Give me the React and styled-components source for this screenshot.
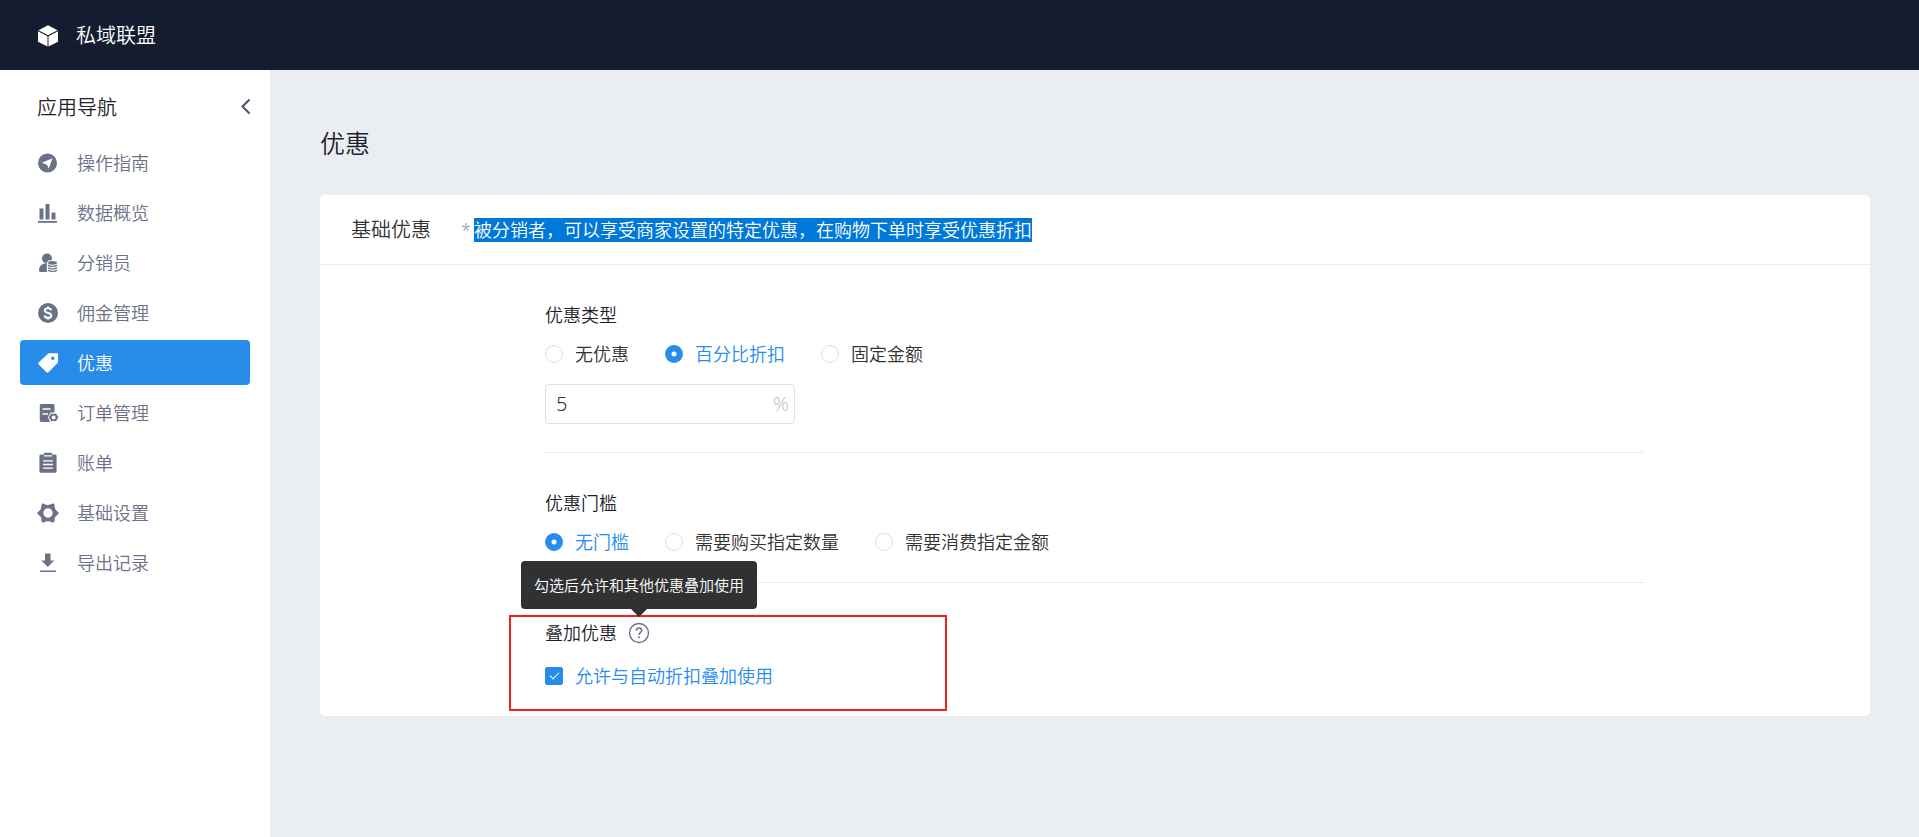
import React, { useState } from 'react';
import styled, { createGlobalStyle, css } from 'styled-components';

const blue = '#288ceb';

const GlobalStyle = createGlobalStyle`
  *, *::before, *::after { box-sizing: border-box; }
  body {
    margin: 0;
    background: #eaedf2;
    color: #1f1f2b;
    font-family: "Noto Sans", "Noto Sans CJK SC", sans-serif;
    font-size: 18px;
    font-weight: 350;
    line-height: 24px;
  }
  button, input { font: inherit; color: inherit; }
`;

const Page = styled.div`
  min-height: 100vh;
  display: flex;
  flex-direction: column;
`;

const TopBar = styled.header`
  height: 70px;
  padding: 2px 37px 0;
  display: flex;
  align-items: center;
  gap: 17px;
  background: #141c30;
  color: #fff;
  font-size: 20px;
`;

const Columns = styled.div`
  flex: 1;
  display: flex;
`;

const Sidebar = styled.aside`
  flex: 0 0 270px;
  padding: 23px 20px 20px;
  background: #fff;
`;

const SidebarHead = styled.div`
  display: flex;
  align-items: center;
  justify-content: space-between;
  padding-left: 17px;
  margin-bottom: 17px;
`;

const SidebarTitle = styled.h2`
  margin: 0;
  font-size: 20px;
  font-weight: inherit;
  line-height: 30px;
`;

const IconButton = styled.button`
  display: flex;
  padding: 0;
  border: 0;
  background: none;
  color: #4a5070;
  cursor: pointer;
`;

const NavList = styled.nav`
  display: flex;
  flex-direction: column;
  gap: 5px;
`;

const NavItem = styled.a`
  display: flex;
  align-items: center;
  gap: 18px;
  height: 45px;
  padding: 0 17px;
  border-radius: 4px;
  color: #6b7285;
  text-decoration: none;
  ${(p) => p.$active && css`
    background: ${blue};
    color: #fff;
  `}
`;

const Main = styled.main`
  flex: 1;
  min-width: 0;
  padding: 58px 49px 58px 50px;
`;

const PageTitle = styled.h1`
  margin: 0 0 37px;
  font-size: 25px;
  font-weight: inherit;
  line-height: 30px;
`;

const Card = styled.section`
  background: #fff;
  border-radius: 5px;
`;

const CardHead = styled.div`
  display: flex;
  align-items: center;
  gap: 30px;
  height: 70px;
  padding: 0 31px;
  border-bottom: 1px solid #ebedf0;
`;

const CardTitle = styled.h2`
  margin: 0;
  color: #333;
  font-size: 20px;
  font-weight: inherit;
`;

const Hint = styled.p`
  display: flex;
  gap: 3px;
  margin: 0;
  color: #999;
`;

const Highlight = styled.mark`
  background: #0078d7;
  color: #fff;
`;

const Form = styled.form`
  padding: 0 225px;
`;

const Group = styled.fieldset`
  position: relative;
  min-width: 0;
  margin: 0;
  padding: 38px 0 28px;
  border: 0;
  & + & { border-top: 1px solid #ebedf0; }
`;

const GroupTitle = styled.div`
  display: flex;
  align-items: center;
  gap: 11px;
  margin-bottom: 15px;
`;

const Options = styled.div`
  display: flex;
  flex-wrap: wrap;
  gap: 12px 36px;
`;

const Choice = styled.label`
  display: flex;
  align-items: center;
  gap: 12px;
  color: #333;
  cursor: pointer;
  &:has(input:checked) { color: ${blue}; }
`;

const CheckRow = styled.div`
  padding-top: 4px;
`;

const Radio = styled.input.attrs({ type: 'radio' })`
  appearance: none;
  width: 18px;
  height: 18px;
  margin: 0;
  border: 1px solid #dcdfe6;
  border-radius: 50%;
  background: #fff;
  &:checked {
    border-color: ${blue};
    background: radial-gradient(circle, #fff 2px, ${blue} 3px);
  }
`;

const Checkbox = styled.input.attrs({ type: 'checkbox' })`
  appearance: none;
  display: grid;
  place-items: center;
  width: 18px;
  height: 18px;
  margin: 0;
  border: 1px solid #dcdfe6;
  border-radius: 2px;
  background: #fff;
  &:checked {
    border-color: ${blue};
    background: ${blue};
  }
  &:checked::after {
    content: "";
    width: 5px;
    height: 9px;
    margin-bottom: 3px;
    border: solid #fff;
    border-width: 0 1px 1px 0;
    transform: rotate(45deg);
  }
`;

const AmountBox = styled.div`
  display: flex;
  align-items: center;
  width: 250px;
  height: 40px;
  margin-top: 18px;
  padding: 0 5px 0 10px;
  border: 1px solid #dcdfe6;
  border-radius: 4px;
  color: #333;
  font-size: 20px;
`;

const AmountInput = styled.input`
  flex: 1;
  min-width: 0;
  padding: 0;
  border: 0;
  outline: 0;
  background: none;
`;

const Unit = styled.span`
  color: #c0c4cc;
`;

const HelpAnchor = styled.span`
  position: relative;
  display: flex;
`;

const Tooltip = styled.span`
  position: absolute;
  z-index: 2;
  bottom: calc(100% + 13px);
  left: 50%;
  transform: translateX(-50%);
  padding: 12px 13px;
  border-radius: 4px;
  background: #303133;
  color: #fff;
  font-size: 15px;
  white-space: nowrap;
  &::after {
    content: "";
    position: absolute;
    top: 100%;
    left: 50%;
    margin-left: -8px;
    border: 8px solid transparent;
    border-bottom-width: 0;
    border-top-color: #303133;
  }
`;

const Callout = styled.div`
  position: absolute;
  top: 32px;
  left: -36px;
  width: 438px;
  height: 96px;
  border: 2px solid #f81d1d;
  pointer-events: none;
`;

const Svg = ({ size = 22, children }) => (
  <svg width={size} height={size} viewBox="0 0 22 22" fill="currentColor" aria-hidden="true">
    {children}
  </svg>
);

const icons = {
  cube: (
    <>
      <path d="M11 .3 20.500 5.300 11 10.200 1.500 5.300Z" />
      <path d="M1 6.300 10.500 11.200V21.600L1 16.800Z" />
      <path d="M21 6.300 11.500 11.200V21.600L21 16.800Z" />
    </>
  ),
  guide: (
    <path fillRule="evenodd" d="M10.5 1.5a9.5 9.5 0 1 0 0 19 9.5 9.5 0 0 0 0-19ZM15.5 6.2 11.8 16.5 9.9 12.7 4.8 10.7Z" />
  ),
  chart: (
    <>
      <path d="M2.500 6.500h4v11h-4zM8.500 2h4v15.500h-4zM14.500 10.500h4v7h-4z" />
      <path d="M1 19h19v1.800H1z" />
    </>
  ),
  agent: (
    <>
      <circle cx="10" cy="6.500" r="5" />
      <path d="M8 11.500C4.500 12 2 14.500 2 18.500c0 .9.700 1.500 1.500 1.500H10v-9Z" />
      <path d="M9.800 10.500 12 8.200h7.500l2.500 2.300v9L18 22h-5l-3.200-2.500Z" fill="#fff" />
      <ellipse cx="15.500" cy="10.800" rx="4.500" ry="1.900" />
      <path d="M11 13c1.600 1.900 7.400 1.900 9 0M11 15.500c1.600 1.900 7.400 1.900 9 0M11 18c1.600 1.900 7.400 1.900 9 0" fill="none" stroke="currentColor" strokeWidth="1.300" />
    </>
  ),
  money: (
    <>
      <circle cx="11" cy="11" r="10" />
      <path d="M14.200 8.200C13.800 6.900 12.500 6.300 11 6.300c-1.900 0-3.200.9-3.200 2.300 0 3.100 6.600 1.500 6.600 4.800 0 1.500-1.500 2.400-3.400 2.400-1.800 0-3.200-.8-3.500-2.300M11 4.500v2M11 15.500v2" fill="none" stroke="#fff" strokeWidth="2" />
    </>
  ),
  tag: (
    <path fillRule="evenodd" d="M12.200 1.300H20c.6 0 1 .4 1 1v7.500c0 .5-.2.900-.5 1.200l-9 9.300c-.6.600-1.400.6-2 0L1.700 12.600c-.6-.6-.6-1.400 0-2L11 1.800c.3-.3.700-.5 1.200-.5ZM15.800 4.600a1.700 1.700 0 1 0 0 3.400 1.700 1.700 0 0 0 0-3.400Z" />
  ),
  order: (
    <>
      <path d="M4.500 2h11.300c1 0 1.700.7 1.700 1.700V20h-13C3.500 20 2.800 19.300 2.800 18.300V3.700C2.800 2.700 3.500 2 4.500 2Z" />
      <path d="M5.500 7h8M5.500 12h5.500" stroke="#fff" strokeWidth="1.600" />
      <path d="M11 15.300 13.500 10.500H22v10.500H13.500Z" fill="#fff" />
      <path fillRule="evenodd" d="m14.200 11.500 1.300.3h2.200l1.300-.3 1 1.800.6 1 .9 1-.9 1.100-.6 1-1 1.800-1.300-.3h-2.200l-1.300.3-1-1.800-.6-1-.9-1.100.9-1 .6-1ZM16.600 13.400a2 2 0 1 0 0 4 2 2 0 0 0 0-4Z" />
    </>
  ),
  bill: (
    <>
      <path d="M4 2.500h3V2c0-.8.600-1.200 1.300-1.200h5.400c.7 0 1.300.4 1.300 1.200v.5h3c.9 0 1.600.6 1.600 1.500v15.200c0 .9-.7 1.500-1.600 1.500H4c-.9 0-1.600-.6-1.600-1.500V4c0-.9.700-1.500 1.600-1.500Z" />
      <path d="M7 3.800h8M6 8.800h10M6 12.500h10M6 16.200h10" stroke="#fff" strokeWidth="1.300" />
    </>
  ),
  settings: (
    <path fillRule="evenodd" d="M5.200 1.800c.8-.6 1.700-.4 2.300.2.900.8 2 .9 3.500.9s2.600-.1 3.500-.9c.6-.6 1.500-.8 2.300-.2.800.6 1 1.400.8 2.200-.2 1.300.3 2.300 1 3.500.8 1.200 1.400 1.700 2.300 2.200 1 .7 1 2 0 2.700-.9.500-1.500 1-2.300 2.200-.7 1.200-1.200 2.200-1 3.500.2.800 0 1.600-.8 2.200-.8.600-1.700.4-2.300-.2-.9-.8-2-.9-3.500-.9s-2.600.1-3.500.9c-.6.6-1.500.8-2.300.2-.8-.6-1-1.400-.8-2.200.2-1.300-.3-2.300-1-3.500C2.600 13.400 2 12.900 1.100 12.400c-1-.7-1-2 0-2.700C2 9.200 2.600 8.700 3.400 7.500c.7-1.200 1.200-2.200 1-3.500-.2-.8 0-1.600.8-2.200ZM11 6.300a4.700 4.700 0 1 0 0 9.400 4.700 4.700 0 0 0 0-9.400Z" />
  ),
  download: (
    <>
      <path d="M8 1.500h5.500V8.500h3.700L10.800 15 4.300 8.500H8Z" />
      <path d="M3 18.500h16v1.500H3z" />
    </>
  ),
};

const navigation = [
  ['guide', '操作指南'],
  ['chart', '数据概览'],
  ['agent', '分销员'],
  ['money', '佣金管理'],
  ['tag', '优惠'],
  ['order', '订单管理'],
  ['bill', '账单'],
  ['settings', '基础设置'],
  ['download', '导出记录'],
];

function RadioGroup({ name, options, initial }) {
  const [value, setValue] = useState(initial);
  return (
    <Options>
      {options.map((label) => (
        <Choice key={label}>
          <Radio name={name} value={label} checked={value === label} onChange={() => setValue(label)} />
          {label}
        </Choice>
      ))}
    </Options>
  );
}

export default function App() {
  return (
    <Page>
      <GlobalStyle />
      <TopBar>
        <Svg>{icons.cube}</Svg>
        私域联盟
      </TopBar>
      <Columns>
        <Sidebar>
          <SidebarHead>
            <SidebarTitle>应用导航</SidebarTitle>
            <IconButton type="button" aria-label="收起导航">
              <svg width="12" height="18" viewBox="0 0 12 18" fill="none" stroke="currentColor" strokeWidth="2" aria-hidden="true">
                <path d="M11.500 .500 4.500 7.500 11.500 14.500" />
              </svg>
            </IconButton>
          </SidebarHead>
          <NavList>
            {navigation.map(([icon, label]) => (
              <NavItem
                key={icon}
                href={`#${icon}`}
                $active={icon === 'tag'}
                aria-current={icon === 'tag' ? 'page' : undefined}
              >
                <Svg>{icons[icon]}</Svg>
                {label}
              </NavItem>
            ))}
          </NavList>
        </Sidebar>
        <Main>
          <PageTitle>优惠</PageTitle>
          <Card>
            <CardHead>
              <CardTitle>基础优惠</CardTitle>
              <Hint>
                <span>*</span>
                <Highlight>被分销者，可以享受商家设置的特定优惠，在购物下单时享受优惠折扣</Highlight>
              </Hint>
            </CardHead>
            <Form>
              <Group aria-label="优惠类型">
                <GroupTitle>优惠类型</GroupTitle>
                <RadioGroup name="type" options={['无优惠', '百分比折扣', '固定金额']} initial="百分比折扣" />
                <AmountBox>
                  <AmountInput type="text" defaultValue="5" aria-label="折扣百分比" />
                  <Unit>%</Unit>
                </AmountBox>
              </Group>
              <Group aria-label="优惠门槛">
                <GroupTitle>优惠门槛</GroupTitle>
                <RadioGroup name="threshold" options={['无门槛', '需要购买指定数量', '需要消费指定金额']} initial="无门槛" />
              </Group>
              <Group aria-label="叠加优惠">
                <GroupTitle>
                  叠加优惠
                  <HelpAnchor>
                    <IconButton type="button" aria-label="帮助" aria-describedby="stack-tip">
                      <svg width="22" height="22" viewBox="0 0 22 22" fill="none" stroke="#6b7285" aria-hidden="true">
                        <circle cx="11" cy="11" r="9.500" strokeWidth="1.400" />
                        <path d="M8.300 8.800c0-1.700 1.100-2.800 2.700-2.800s2.700 1 2.700 2.500c0 2-2.700 2.200-2.700 4.400M11 14.300v1.900" strokeWidth="1.500" />
                      </svg>
                    </IconButton>
                    <Tooltip role="tooltip" id="stack-tip">勾选后允许和其他优惠叠加使用</Tooltip>
                  </HelpAnchor>
                </GroupTitle>
                <CheckRow>
                  <Choice>
                    <Checkbox defaultChecked />
                    允许与自动折扣叠加使用
                  </Choice>
                </CheckRow>
                <Callout />
              </Group>
            </Form>
          </Card>
        </Main>
      </Columns>
    </Page>
  );
}
